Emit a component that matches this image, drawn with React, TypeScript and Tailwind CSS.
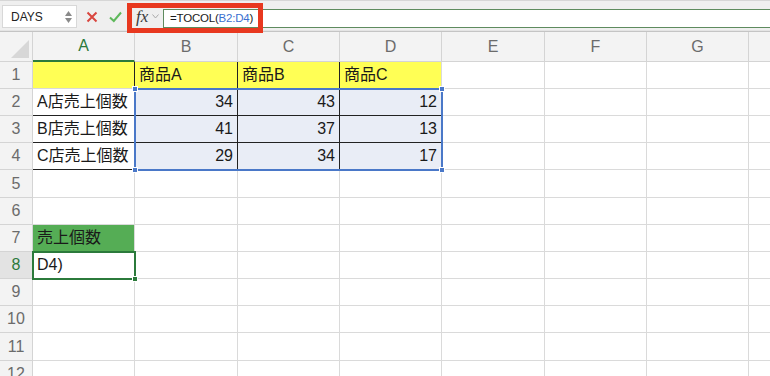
import React from 'react';

const FONT = "font-['Liberation_Sans','Noto_Sans_CJK_JP',sans-serif]";

const colLetters = ['A', 'B', 'C', 'D', 'E', 'F', 'G', ''];
const rowNums = [1, 2, 3, 4, 5, 6, 7, 8, 9, 10, 11, 12];

type Cell = { text?: string; right?: boolean; cls?: string };

// contents of A..H for each row
const data: Record<number, Cell[]> = {
  1: [
    { cls: 'bg-[#ffff55] border-r-[#222]' },
    { text: '商品A', cls: 'bg-[#ffff55] border-r-[#222]' },
    { text: '商品B', cls: 'bg-[#ffff55] border-r-[#222]' },
    { text: '商品C', cls: 'bg-[#ffff55]' },
  ],
  2: [
    { text: 'A店売上個数', cls: 'border-b-[#222]' },
    { text: '34', right: true, cls: 'bg-[#e9edf6] border-r-[#222] border-b-[#222]' },
    { text: '43', right: true, cls: 'bg-[#e9edf6] border-r-[#222] border-b-[#222]' },
    { text: '12', right: true, cls: 'bg-[#e9edf6] border-b-[#222]' },
  ],
  3: [
    { text: 'B店売上個数', cls: 'border-b-[#222]' },
    { text: '41', right: true, cls: 'bg-[#e9edf6] border-r-[#222] border-b-[#222]' },
    { text: '37', right: true, cls: 'bg-[#e9edf6] border-r-[#222] border-b-[#222]' },
    { text: '13', right: true, cls: 'bg-[#e9edf6] border-b-[#222]' },
  ],
  4: [
    { text: 'C店売上個数', cls: 'border-b-[#222]' },
    { text: '29', right: true, cls: 'bg-[#e9edf6] border-r-[#222] border-b-[#222]' },
    { text: '34', right: true, cls: 'bg-[#e9edf6] border-r-[#222] border-b-[#222]' },
    { text: '17', right: true, cls: 'bg-[#e9edf6] border-b-[#222]' },
  ],
  7: [{ text: '売上個数', cls: 'bg-[#55ad55]' }],
  8: [{ text: 'D4)' }],
};

const Corner = ({ className }: { className: string }) => (
  <div className={`absolute w-[6px] h-[6px] bg-[#4a78c8] border border-white ${className}`} />
);

export default function App() {
  return (
    <div className={`relative w-[770px] h-[376px] overflow-hidden bg-white text-[#1a1a1a] ${FONT}`}>
      {/* formula bar */}
      <div className="h-[30px] flex items-end pb-[2px] bg-[#efefef] border-t border-[#d6d6d6]">
        <div className="ml-[2px] w-[75px] h-[23px] bg-white border border-[#d8d8d8] flex items-center justify-between pl-[8px] pr-[4px]">
          <span className="text-[12px] text-[#222]">DAYS</span>
          <div className="flex flex-col gap-[2px]">
            <svg width="7" height="5" viewBox="0 0 7 5"><path d="M3.5 0L7 5H0Z" fill="#8a8a8a" /></svg>
            <svg width="7" height="5" viewBox="0 0 7 5"><path d="M0 0H7L3.5 5Z" fill="#8a8a8a" /></svg>
          </div>
        </div>
        <div className="w-[50px] h-[23px] flex items-center justify-around pl-[4px]">
          <svg width="12" height="12" viewBox="0 0 12 12"><path d="M1.5 1.5L10.5 10.5M10.5 1.5L1.5 10.5" stroke="#d9463f" strokeWidth="2" /></svg>
          <svg width="13" height="12" viewBox="0 0 13 12"><path d="M1 6.5L4.8 10L12 1.5" stroke="#5eb85b" strokeWidth="2" fill="none" /></svg>
        </div>
        <div className="w-[36px] h-[23px] flex items-center pl-[9px] gap-[4px]">
          <span className="text-[17px] leading-none italic text-[#3a3a3a] font-['Liberation_Serif',serif]">fx</span>
          <svg width="7" height="5" viewBox="0 0 7 5"><path d="M0.5 0.5L3.5 4L6.5 0.5" stroke="#aaa" fill="none" /></svg>
        </div>
        <div className="flex-1 h-[19px] bg-white border border-[#5e8b5e] border-r-0 flex items-center pl-[6px] text-[11.5px] tracking-[-0.2px]">
          <span>=TOCOL(</span>
          <span className="text-[#3a6fd0]">B2:D4</span>
          <span>)</span>
        </div>
      </div>
      <div className="h-[2px] border-b border-[#c4c4c4] bg-[#e4e4e4]" />

      {/* grid */}
      <div className="relative grid grid-cols-[33px_102px_103px_102px_102px_103px_102px_102px_40px] grid-rows-[30px_27px_27px_27px_27px_28px_27px_27px_27px_27px_27px_28px_27px]">
        <div className="relative bg-[#f3f3f3] border-r border-b border-[#d4d4d4]">
          <svg className="absolute right-[3px] bottom-[3px]" width="18" height="18" viewBox="0 0 18 18"><path d="M18 0V18H0Z" fill="#d7d7d7" /></svg>
        </div>
        {colLetters.map((c, i) => (
          <div
            key={c + i}
            className={`flex items-center justify-center text-[16px] bg-[#f3f3f3] border-r border-[#d4d4d4] ${
              i === 0 ? 'text-[#2b7a3b] border-b-2 border-b-[#2b7a3b]' : 'text-[#6b6b6b] border-b border-b-[#d4d4d4]'
            }`}
          >
            {c}
          </div>
        ))}
        {rowNums.map(r => (
          <React.Fragment key={r}>
            <div
              className={`flex items-center justify-center text-[16px] border-b border-r border-[#d4d4d4] ${
                r === 8 ? 'bg-[#e3e3e3] text-[#2b7a3b]' : 'bg-[#f3f3f3] text-[#6b6b6b]'
              }`}
            >
              {r}
            </div>
            {colLetters.map((_, ci) => {
              const cell = (data[r] || [])[ci] || {};
              return (
                <div
                  key={ci}
                  className={`flex items-center px-[4px] text-[16px] whitespace-nowrap overflow-hidden border-r border-b border-[#dadada] ${
                    cell.right ? 'justify-end' : ''
                  } ${cell.cls || ''}`}
                >
                  {cell.text}
                </div>
              );
            })}
          </React.Fragment>
        ))}

        {/* B2:D4 selection */}
        <div className="absolute left-[134px] top-[56px] w-[309px] h-[83px] border-2 border-[#4a78c8] pointer-events-none">
          <Corner className="-left-[4px] -top-[4px]" />
          <Corner className="-right-[4px] -top-[4px]" />
          <Corner className="-left-[4px] -bottom-[4px]" />
          <Corner className="-right-[4px] -bottom-[4px]" />
        </div>
        {/* active cell A8 */}
        <div className="absolute left-[32px] top-[219px] w-[104px] h-[29px] border-2 border-[#2b7a3b] pointer-events-none">
          <div className="absolute -right-[4px] -bottom-[4px] w-[6px] h-[6px] bg-[#2b7a3b] border border-white" />
        </div>
      </div>

      {/* annotation */}
      <div className="absolute left-[127px] top-[3px] w-[136px] h-[30px] border-[5px] border-[#e8381f]" />
    </div>
  );
}
